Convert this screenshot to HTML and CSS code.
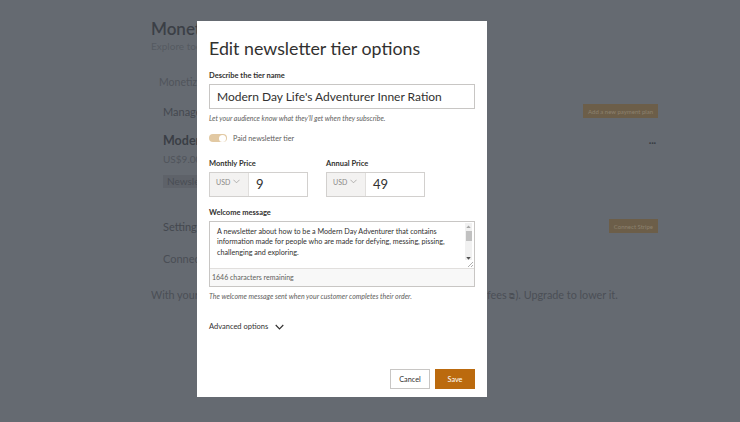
FILE: index.html
```html
<!DOCTYPE html>
<html lang="en">
<head>
<meta charset="utf-8">
<title>Edit newsletter tier options</title>
<link rel="stylesheet" href="styles.css">
</head>
<body>
<div class="page">
  <header class="page-head">
    <h1 class="page-title">Monetization</h1>
    <p class="page-sub">Explore tools</p>
  </header>
  <nav class="tabs"><span class="tab">Monetization</span></nav>
  <section class="card">
    <div class="card-row">
      <h2 class="card-title">Manage plans</h2>
      <button class="bg-btn">Add a new payment plan</button>
    </div>
    <div class="plan">
      <div class="plan-row">
        <h3 class="plan-name">Modern Day</h3>
        <span class="more">...</span>
      </div>
      <div class="plan-price">US$9.00/month</div>
      <span class="pill">Newsletter</span>
    </div>
  </section>
  <section class="card">
    <div class="card-row">
      <h2 class="card-title">Settings</h2>
      <button class="bg-btn">Connect Stripe</button>
    </div>
    <div class="connect">Connect Stripe</div>
  </section>
  <p class="fee"><span class="fee-start">With your current plan</span><span class="fee-end">fees <span class="ext">⧉</span>). Upgrade to lower it.</span></p>
</div>

<div class="overlay"></div>

<div class="modal" role="dialog" aria-label="Edit newsletter tier options">
  <h2 class="m-title">Edit newsletter tier options</h2>

  <div class="m-label">Describe the tier name</div>
  <div class="m-input">Modern Day Life's Adventurer Inner Ration</div>
  <p class="m-help">Let your audience know what they'll get when they subscribe.</p>

  <div class="m-toggle-row">
    <span class="toggle"><span class="knob"></span></span>
    <span class="toggle-label">Paid newsletter tier</span>
  </div>

  <div class="m-prices">
    <div class="m-price">
      <div class="m-label">Monthly Price</div>
      <div class="m-pbox">
        <div class="m-cur">USD <svg class="cur-chev" viewBox="0 0 8 5" width="7" height="5"><path d="M0.5 0.5 L4 4 L7.5 0.5" fill="none" stroke="#a19f9d" stroke-width="0.9"/></svg></div>
        <div class="m-val">9</div>
      </div>
    </div>
    <div class="m-price">
      <div class="m-label">Annual Price</div>
      <div class="m-pbox">
        <div class="m-cur">USD <svg class="cur-chev" viewBox="0 0 8 5" width="7" height="5"><path d="M0.5 0.5 L4 4 L7.5 0.5" fill="none" stroke="#a19f9d" stroke-width="0.9"/></svg></div>
        <div class="m-val">49</div>
      </div>
    </div>
  </div>

  <div class="m-label m-label-wm">Welcome message</div>
  <div class="m-textarea">
    <div class="m-ta-body">
      <div class="m-ta-text">A newsletter about how to be a Modern Day Adventurer that contains information made for people who are made for defying, messing, pissing, challenging and exploring.</div>
      <div class="m-scroll">
        <svg class="sc-arrow" viewBox="0 0 6 4" width="5" height="3"><path d="M0 4 L3 0.5 L6 4Z" fill="#a6a6a6"/></svg>
        <span class="sc-thumb"></span>
        <span class="sc-space"></span>
        <svg class="sc-arrow" viewBox="0 0 6 4" width="5" height="3"><path d="M0 0 L3 3.5 L6 0Z" fill="#505050"/></svg>
      </div>
      <svg class="grip" viewBox="0 0 6 6" width="6" height="6"><path d="M6 1 L1 6 M6 4 L4 6" stroke="#9a9a9a" stroke-width="0.8"/></svg>
    </div>
    <div class="m-ta-count">1646 characters remaining</div>
  </div>
  <p class="m-help">The welcome message sent when your customer completes their order.</p>

  <div class="m-adv">Advanced options <svg viewBox="0 0 10 6" width="9" height="6"><path d="M0.8 0.8 L5 5 L9.2 0.8" fill="none" stroke="#323130" stroke-width="1.3"/></svg></div>

  <div class="m-actions">
    <button class="btn">Cancel</button>
    <button class="btn btn-primary">Save</button>
  </div>
</div>
</body>
</html>
```

FILE: styles.css
```css
* { box-sizing: border-box; }
html, body { margin: 0; padding: 0; }
body {
  width: 740px;
  height: 422px;
  overflow: hidden;
  background: #656a71;
  font-family: Lato, "Open Sans", sans-serif;
  color: #3b3f46;
  position: relative;
}

.page {
  width: 507px;
  margin-left: 151px;
  padding-top: 18px;
  white-space: nowrap;
}
.page-title { margin: 0; font-size: 17px; line-height: 22px; font-weight: 600; color: #3b3f46; }
.page-sub { margin: 0; font-size: 10px; line-height: 12px; color: #555a61; }
.tabs { padding: 18px 0 0 8px; height: 49px; }
.tab { font-size: 10.5px; color: #50545b; }
.card { padding-left: 12px; }
.card-row { display: flex; justify-content: space-between; align-items: center; height: 20px; }
.card-title { margin: 0; font-size: 11px; font-weight: 400; color: #44484f; }
.bg-btn {
  font: inherit;
  font-size: 6px;
  height: 14px;
  padding: 0 5px;
  border: 0;
  background: #6c5e49;
  color: #8c826f;
}
.plan { padding-top: 10px; height: 95px; }
.plan-row { display: flex; justify-content: space-between; align-items: center; height: 18px; }
.plan-name { margin: 0; font-size: 12.5px; font-weight: 700; color: #3a3e45; }
.more { font-size: 11px; line-height: 10px; font-weight: 700; color: #383c43; padding: 0 2px 0 0; letter-spacing: -0.2px; }
.plan-price { font-size: 10px; color: #50545b; line-height: 18px; margin-top: 1px; }
.pill { display: inline-block; margin-top: 7px; padding: 0 4px; height: 13px; line-height: 13px; font-size: 10px; color: #494d54; background: #5e6269; }
.connect { font-size: 11px; color: #4a4e55; margin-top: 16px; height: 36px; }
.fee { margin: 0; font-size: 10.8px; line-height: 14px; color: #4b4f56; display: flex; }
.fee-start { width: 336px; overflow: hidden; }
.ext { font-size: 8px; }

.overlay { position: absolute; inset: 0; background: rgba(101, 106, 113, 0.0); }

/* dialog */
.modal {
  position: absolute;
  left: 197px;
  top: 21px;
  width: 290px;
  height: 376px;
  background: #fff;
  padding: 15px 12px 8px;
  display: flex;
  flex-direction: column;
  color: #323130;
}
.m-title { margin: 0; font-size: 17.8px; line-height: 24px; font-weight: 400; }
.m-label { font-size: 7.5px; line-height: 12px; font-weight: 700; margin-top: 10px; }
.m-input {
  margin-top: 2px;
  height: 25px;
  border: 1px solid #c8c6c4;
  padding: 0 7px;
  font-size: 12px;
  line-height: 23px;
}
.m-help { margin: 4px 0 0; font-size: 7px; line-height: 10px; font-style: italic; color: #605e5c; }
.m-toggle-row { display: flex; align-items: center; gap: 6px; margin-top: 10px; height: 10px; }
.toggle { width: 18px; height: 8px; border-radius: 4px; background: #e2c9a3; display: flex; justify-content: flex-end; align-items: center; padding-right: 1px; }
.knob { width: 7px; height: 7px; border-radius: 50%; background: #fff; }
.toggle-label { font-size: 7.2px; color: #605e5c; }
.m-prices { display: flex; gap: 18px; margin-top: 5px; }
.m-price { width: 99px; }
.m-price .m-label { margin-top: 10px; }
.m-pbox { display: flex; height: 25px; margin-top: 2px; border: 1px solid #d2d0ce; }
.m-cur { width: 39px; background: #f3f2f1; border-right: 1px solid #e1dfdd; font-size: 7px; color: #8a8886; padding: 5px 0 0 6px; display: flex; align-items: flex-start; gap: 3px; }
.cur-chev { margin-top: 1px; }
.m-val { flex: 1; font-size: 13px; line-height: 23px; padding-left: 7px; }
.m-label-wm { margin-top: 10px; }
.m-textarea { margin-top: 2px; border: 1px solid #c8c6c4; }
.m-ta-body { position: relative; height: 46px; display: flex; }
.m-ta-text { flex: 1; padding: 5px 6px 0 7px; font-size: 7.2px; line-height: 10.4px; color: #323130; }
.m-scroll { width: 7px; margin: 1px 2px 8px 0; background: #f1f1f1; display: flex; flex-direction: column; align-items: center; }
.sc-arrow { margin-top: 2px; flex: none; }
.sc-thumb { width: 6px; height: 10px; background: #c1c1c1; margin-top: 3px; }
.sc-space { flex: 1; }
.grip { position: absolute; right: 1px; bottom: 1px; }
.m-ta-count { height: 18px; background: #f8f8f8; border-top: 1px solid #e1dfdd; font-size: 7px; line-height: 17px; color: #605e5c; padding-left: 2px; }
.m-adv { margin-top: 20px; display: flex; align-items: center; gap: 7px; font-size: 7.5px; line-height: 12px; color: #323130; }
.m-actions { margin-top: auto; display: flex; justify-content: flex-end; gap: 5px; }
.btn { font: inherit; font-size: 7.3px; width: 40px; height: 20px; border: 1px solid #c8c6c4; background: #fff; color: #323130; padding: 0; }
.btn-primary { background: #bb6a0e; border-color: #bb6a0e; color: #fff; }
```
